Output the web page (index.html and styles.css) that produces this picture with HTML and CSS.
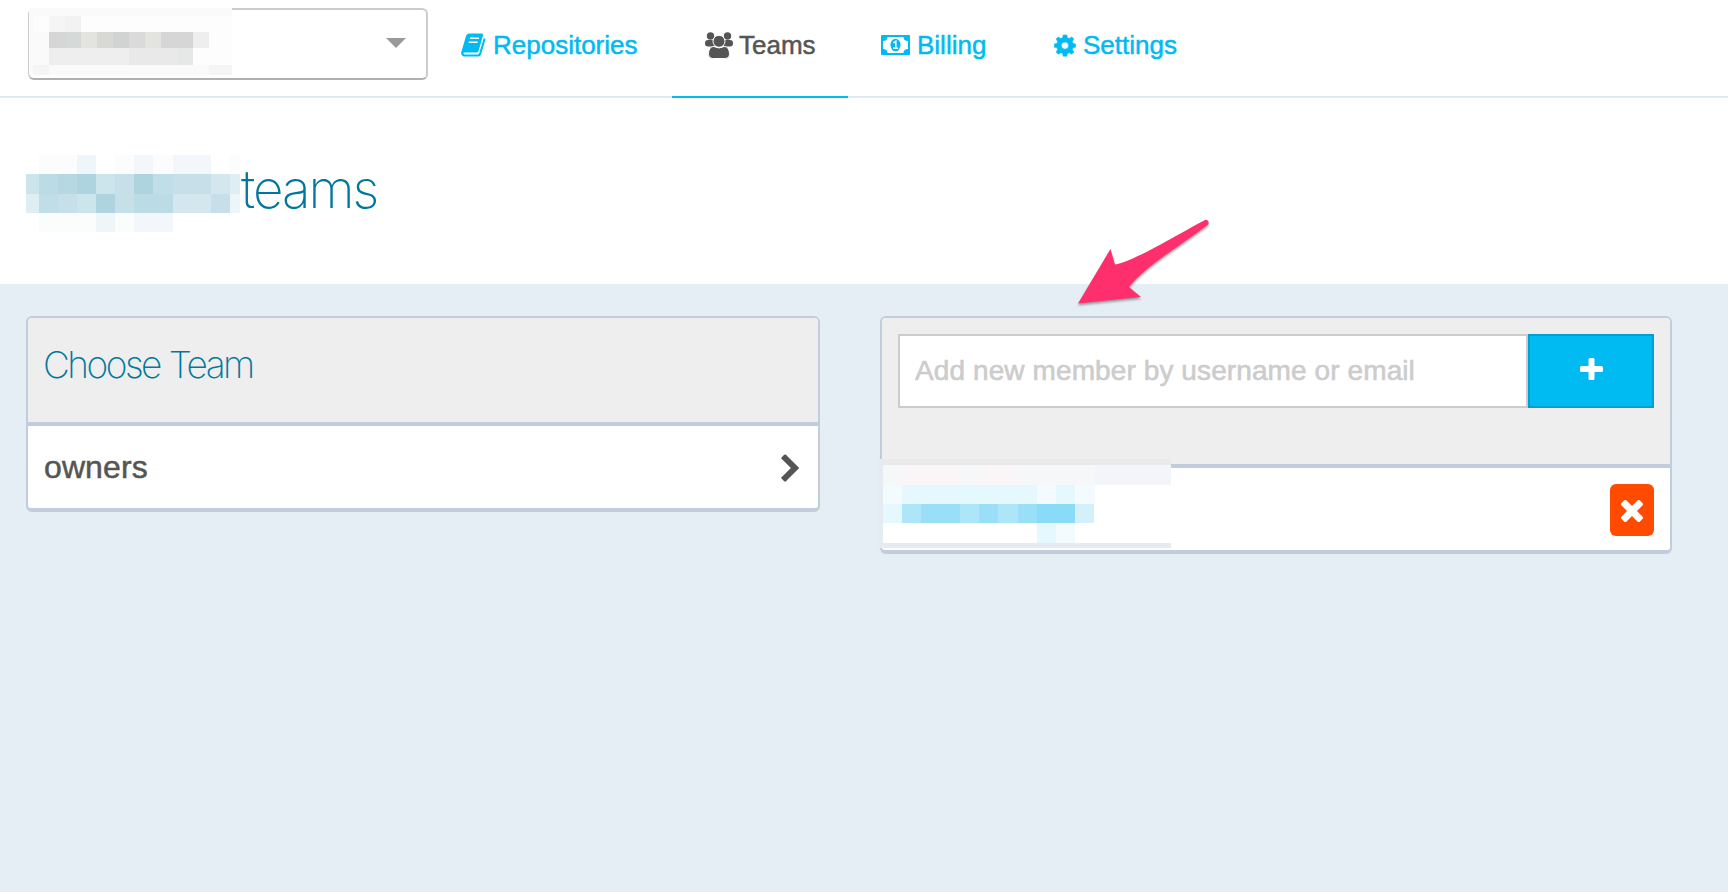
FILE: index.html
```
<!DOCTYPE html>
<html lang="en">
<head>
<meta charset="utf-8">
<title>Teams</title>
<link rel="stylesheet" href="styles.css">
</head>
<body>
<header class="topbar">
  <div class="account-select">
    <svg class="account-name" width="203" height="67" viewBox="28 8 203 67" shape-rendering="crispEdges">
      <path fill="#fafafa" d="M28 8h203v67H28z"/>
      <path fill="#fdfdfd" d="M80 16h151v49H80zM32 16h16v16H32z"/>
      <path fill="#f5f5f5" d="M48 16h16v16H48zM32 65h16v10H32zM208 65h23v10h-23z"/>
      <path fill="#f2f2f2" d="M64 16h16v16H64z"/>
      <path fill="#d6d6d6" d="M48 32h16v16H48zM160 32h32v16h-32z"/>
      <path fill="#d5dad8" d="M64 32h16v16H64z"/>
      <path fill="#e3e3e0" d="M80 32h16v16H80zM144 32h16v16h-16z"/>
      <path fill="#d8d8d5" d="M96 32h16v16H96z"/>
      <path fill="#d0d3d1" d="M112 32h16v16h-16z"/>
      <path fill="#dadadb" d="M128 32h16v16h-16z"/>
      <path fill="#eee" d="M192 32h16v16h-16zM48 48h80v17H48z"/>
      <path fill="#e9e9e9" d="M128 48h48v17h-48z"/>
      <path fill="#e5e8e7" d="M176 48h16v17h-16z"/>
    </svg>
    <svg class="caret" width="20" height="10" viewBox="0 0 20 10"><path fill="#999" d="M0 0h20L10 10z"/></svg>
  </div>
  <nav class="tabs">
    <a class="tab tab-repos">
      <svg class="icon" width="25" height="24" viewBox="0 0 25 24">
        <path fill="currentColor" d="M8 .5h12.500q2 0 1.500 2L17.500 18q-.5 1.500-2 1.500H4q-2 0-1.500 1.200.3.800 1.500.800h12.500q1.200 0 1.700-1.300L22.800 5l1.300.8q.5.400.2 1.300L20 21.500q-.6 2-2.500 2H3.500Q0 23.200.2 19.500L5 3Q5.800.5 8 .5z"/>
        <path fill="none" stroke="#fff" stroke-width="1.500" d="M9 5.200h9M7.600 9.200h9"/>
      </svg>Repositories</a>
    <a class="tab tab-teams active">
      <svg class="icon" width="28" height="27" viewBox="0 0 28 27" fill="currentColor">
        <circle cx="5.500" cy="4" r="3.700"/><circle cx="22.500" cy="4" r="3.700"/>
        <rect y="8" width="10" height="6.500" rx="3"/><rect x="18" y="8" width="10" height="6.500" rx="3"/>
        <path stroke="#fff" stroke-width="1" d="M9 14.500c-4 0-5.500 3.500-5.500 8Q3.500 26.500 7.500 26.500h13q4 0 4-4c0-4.500-1.500-8-5.500-8q-5 3-10 0z"/>
        <circle cx="14" cy="9.300" r="6" stroke="#fff" stroke-width="1"/>
      </svg>Teams</a>
    <a class="tab tab-billing">
      <svg class="icon" width="29" height="20" viewBox="0 0 29 20">
        <rect width="29" height="20" rx="1" fill="currentColor"/>
        <path fill="#fff" d="M6.500 2h16q0 4 4.500 4v8q-4.500 0-4.500 4h-16q0-4-4.500-4V6q4.500 0 4.500-4z"/>
        <ellipse cx="14.500" cy="10" rx="5" ry="6.300" fill="currentColor"/>
        <path fill="none" stroke="#fff" stroke-width="1.500" d="M12.300 7.800l2.500-1.600v7M12 13.300h5.200"/>
      </svg>Billing</a>
    <a class="tab tab-settings">
      <svg class="icon" width="22" height="23" viewBox="0 0 24 24">
        <path fill="currentColor" stroke="currentColor" stroke-width=".6" stroke-linejoin="round" fill-rule="evenodd" d="M10 .5h4l.6 3 2 .8 2.700-1.700 2.400 2.400-1.700 2.700.8 2 2.700.6v3.600l-2.700.6-.8 2 1.700 2.700-2.400 2.400-2.700-1.700-2 .8-.6 3h-4l-.6-3-2-.8-2.700 1.700-2.400-2.400L4 16.500l-.8-2-2.800-.6v-3.600l2.800-.6.8-2L2.300 5l2.400-2.400 2.700 1.700 2-.8zM12 8.200a3.900 3.900 0 1 0 0 7.800 3.900 3.900 0 0 0 0-7.800z"/>
      </svg>Settings</a>
  </nav>
</header>
<section class="heading">
  <svg class="org-name" width="214" height="78" viewBox="26 155 214 78" shape-rendering="crispEdges">
    <path fill="#fbfdfd" d="M39 155h38v19H39zM115 155h19v19h-19zM153 155h20v19h-20zM230 155h10v19h-10zM39 213h57v19H39zM115 213h19v19h-19z"/>
    <path fill="#eef6f9" d="M77 155h19v19H77zM96 213h19v19H96z"/>
    <path fill="#f3f7fb" d="M134 155h19v19h-19zM173 155h38v19h-38zM134 213h39v19h-39z"/>
    <path fill="#cce4eb" d="M26 174h13v20H26zM96 174h19v20H96zM77 194h19v19H77z"/>
    <path fill="#bbdce5" d="M39 174h19v20H39zM134 194h39v19h-39z"/>
    <path fill="#b5d8e2" d="M58 174h19v20H58z"/>
    <path fill="#aed4df" d="M77 174h19v20H77zM134 174h19v20h-19zM96 194h19v19H96z"/>
    <path fill="#c6dfe9" d="M115 174h19v20h-19zM173 174h38v20h-38zM58 194h19v19H58zM115 194h19v19h-19zM211 194h19v19h-19z"/>
    <path fill="#c0dee7" d="M153 174h20v20h-20zM39 194h19v19H39z"/>
    <path fill="#d4e7ee" d="M211 174h19v20h-19zM173 194h38v19h-38z"/>
    <path fill="#deeef3" d="M230 174h10v20h-10zM26 194h13v19H26z"/>
    <path fill="#ecf5f8" d="M230 194h10v19h-10z"/>
  </svg>
  <h1>teams</h1>
</section>
<main class="content">
  <section class="card team-card">
    <div class="card-head"><h2>Choose Team</h2></div>
    <div class="card-row">
      <span class="team-label">owners</span>
      <svg class="chevron" width="20" height="30" viewBox="0 0 20 30"><path fill="none" stroke="#555" stroke-width="6" d="M2.500 3.500L14 15 2.500 26.500"/><path fill="none" stroke="#555" stroke-width="3" stroke-linecap="round" d="M2 5l2-2M2 25l2 2"/></svg>
    </div>
  </section>
  <section class="card member-card">
    <div class="card-head">
      <form class="add-member">
        <input class="member-input" type="text" placeholder="Add new member by username or email">
        <button class="add-button" type="button" aria-label="Add member">
          <svg width="23" height="22" viewBox="0 0 23 22" fill="#fff"><rect x="8.500" width="6" height="22" rx="1.500"/><rect y="8" width="23" height="6" rx="1.500"/></svg>
        </button>
      </form>
    </div>
    <div class="card-row">
      <button class="remove-button" type="button" aria-label="Remove member">
        <svg width="22" height="22" viewBox="0 0 22 22" fill="#fff"><rect x="-2" y="7.500" width="26" height="7" rx="1.800" transform="rotate(45 11 11)"/><rect x="-2" y="7.500" width="26" height="7" rx="1.800" transform="rotate(-45 11 11)"/></svg>
      </button>
    </div>
    <svg class="member-name" width="293" height="89" viewBox="878 459 293 89" shape-rendering="crispEdges">
      <path fill="#fff" d="M883 465h288v78H883z"/>
      <path fill="#e4ebf3" d="M878 459h5v89h-5zM883 543h288v5H883z"/>
      <path fill="#e9eaec" d="M880 459h291v6H880z"/>
      <path fill="#f6f7f8" d="M883 465h19v20h-19zM960 465h19v20h-19zM1018 465h77v20h-77z"/>
      <path fill="#faf6f8" d="M902 465h58v20h-58zM979 465h39v20h-39z"/>
      <path fill="#f3f5fa" d="M1095 465h76v20h-76z"/>
      <path fill="#f4fbff" d="M883 485h19v19h-19zM1037 485h19v19h-19zM1075 485h20v19h-20zM1056 523h19v20h-19z"/>
      <path fill="#e5f8fe" d="M902 485h135v19H902zM1056 485h19v19h-19zM883 504h19v19h-19zM1037 523h19v20h-19z"/>
      <path fill="#ace6f8" d="M902 504h19v19h-19zM960 504h19v19h-19zM998 504h20v19h-20z"/>
      <path fill="#98dff7" d="M921 504h39v19h-39zM979 504h19v19h-19zM1018 504h19v19h-19z"/>
      <path fill="#8adbf7" d="M1037 504h38v19h-38z"/>
      <path fill="#d3f0fb" d="M1075 504h19v19h-19z"/>
    </svg>
  </section>
</main>
<svg class="arrow" width="150" height="100" viewBox="1070 210 150 100">
  <path fill="#ff2f6d" d="M1078 303.500L1110.500 249l4.500 15.500C1135 261 1180 233 1205 220c3-1 5 3 2.500 5C1180 246 1143 268 1129 287l12 10z"/>
</svg>
</body>
</html>
```
FILE: styles.css
```
* { box-sizing: border-box; }
body {
  margin: 0;
  min-height: 892px;
  background: #e5edf5;
  color: #555;
  font-family: "Liberation Sans", Arial, sans-serif;
  overflow: hidden;
}
svg { display: block; flex: none; }
.topbar {
  display: flex;
  height: 98px;
  padding-left: 28px;
  background: #fff;
  border-bottom: 2px solid #dfe9f5;
}
.account-select {
  position: relative;
  display: flex;
  align-items: center;
  justify-content: flex-end;
  width: 400px;
  height: 72px;
  margin-top: 8px;
  padding-right: 20px;
  border: 2px solid #ccc;
  border-bottom-color: #b0b0b0;
  border-radius: 6px;
}
.account-name { position: absolute; left: -1px; top: -2px; }
.caret { margin-bottom: 2px; }
.tabs { display: flex; height: 98px; }
.tab {
  display: flex;
  align-items: center;
  gap: 7px;
  padding: 0 0 8px 33px;
  color: #00bbf2;
  font-size: 26px;
  white-space: nowrap;
  -webkit-text-stroke: .5px currentColor;
}
.icon { -webkit-text-stroke: 0; }
.tab-repos { width: 244px; }
.tab-teams { width: 176px; gap: 6px; }
.tab-billing { width: 174px; }
.tab-settings { width: 170px; padding-left: 32px; }
.tab.active { color: #555; border-bottom: 2px solid #00bbf2; padding-bottom: 6px; }
.heading {
  display: flex;
  align-items: flex-start;
  height: 186px;
  padding: 57px 0 0 26px;
  background: #fff;
}
h1, h2 {
  margin: 0;
  color: #00789e;
  font-family: Inter, sans-serif;
  font-weight: 200;
}
h1 {
  margin: 2px 0 0 1px;
  font-size: 53px;
  line-height: 64px;
  letter-spacing: -2px;
}
.content {
  display: grid;
  grid-template-columns: 794px 792px;
  gap: 60px;
  align-items: start;
  padding: 32px 26px;
}
.card {
  position: relative;
  border: 2px solid #c1cddc;
  border-bottom-width: 4px;
  border-radius: 6px;
  background: #fff;
}
.card-head {
  height: 108px;
  padding: 16px;
  border-bottom: 4px solid #c1cddc;
  border-radius: 4px 4px 0 0;
  background: #eee;
}
.member-card .card-head { height: 150px; }
h2 {
  margin: 9px 0 0 -1px;
  font-size: 37px;
  line-height: 44px;
  letter-spacing: -2.500px;
  word-spacing: 1px;
}
.card-row {
  display: flex;
  align-items: center;
  justify-content: space-between;
  height: 82px;
  padding: 0 16px;
  font-size: 32px;
}
.team-label { letter-spacing: .1px; -webkit-text-stroke: .5px currentColor; }
.chevron { margin: 1px 1px 0 0; }
.member-card .card-row { justify-content: flex-end; padding-top: 2px; }
.add-member { display: flex; height: 74px; }
.member-input {
  width: 630px;
  padding: 0 15px;
  border: 2px solid #ccc;
  border-radius: 0;
  background: #fff;
  font: 28px "Liberation Sans", Arial, sans-serif;
  letter-spacing: .1px;
}
.member-input::placeholder { color: #ccc; opacity: 1; -webkit-text-stroke: .6px #ccc; }
.add-button {
  display: flex;
  align-items: center;
  justify-content: center;
  width: 126px;
  padding: 0 0 4px;
  border: 2px solid #009fd0;
  background: #00bbf2;
}
.remove-button {
  display: flex;
  align-items: center;
  justify-content: center;
  width: 44px;
  height: 52px;
  padding: 2px 0 0;
  border: 0;
  border-radius: 6px;
  background: #ff4b00;
}
.member-name { position: absolute; left: -4px; top: 141px; }
.arrow {
  position: absolute;
  left: 1070px;
  top: 210px;
  filter: drop-shadow(0 2px 1px rgba(0, 0, 0, .35));
}
```
